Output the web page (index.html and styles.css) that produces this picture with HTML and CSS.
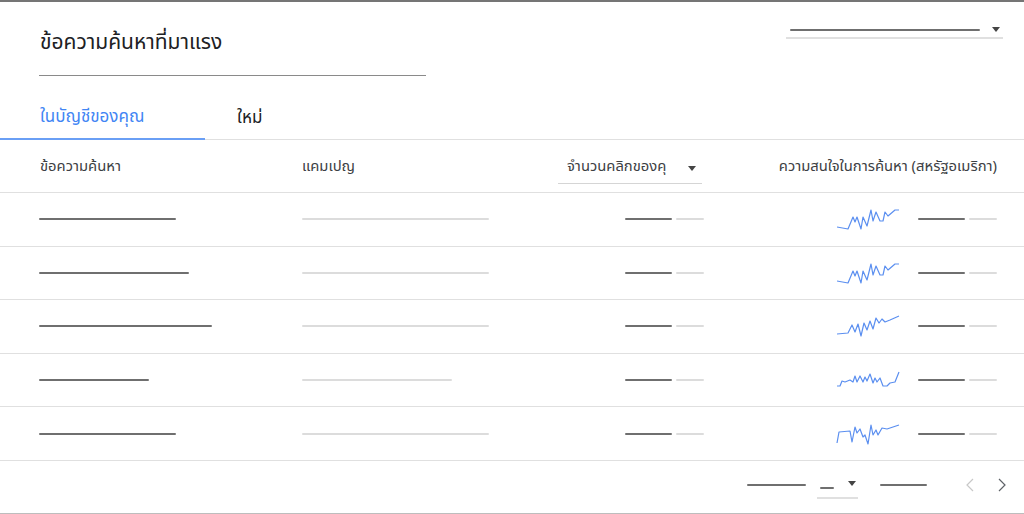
FILE: index.html
```html
<!DOCTYPE html>
<html lang="th">
<head>
<meta charset="utf-8">
<link rel="stylesheet" href="styles.css">
</head>
<body>
<div class="card">
  <div class="top">
    <div class="title-block">
      <h1 class="title">ข้อความค้นหาที่มาแรง</h1>
      <div class="title-rule"></div>
    </div>
    <div class="top-select">
      <span class="ph-dark ts-line"></span>
      <span class="tri"></span>
    </div>
  </div>
  <div class="tabs">
    <div class="tab active">ในบัญชีของคุณ</div>
    <div class="tab second">ใหม่</div>
  </div>
  <div class="table">
    <div class="row head">
      <div class="c1">ข้อความค้นหา</div>
      <div class="c2">แคมเปญ</div>
      <div class="c3"><div class="hsel"><span>จำนวนคลิกของคุ</span><span class="tri"></span></div></div>
      <div class="c4">ความสนใจในการค้นหา (สหรัฐอเมริกา)</div>
    </div>
    <div class="row">
      <div class="c1"><span class="ph-dark" style="width:137px"></span></div>
      <div class="c2"><span class="ph-light" style="width:187px"></span></div>
      <div class="c3"><span class="ph-dark num"></span><span class="ph-light sub"></span></div>
      <div class="c4">
        <svg class="spark" viewBox="836 206 66 28" width="66" height="28"><polyline points="837,228 848,230 853,218 855,223 857,218 861,230 863,218 867,227 871,211 873,222 876,213 880,222 883,222 885,213 888,217 895,211 899,211"/></svg>
        <span class="ph-dark num"></span><span class="ph-light sub"></span>
      </div>
    </div>
    <div class="row">
      <div class="c1"><span class="ph-dark" style="width:150px"></span></div>
      <div class="c2"><span class="ph-light" style="width:187px"></span></div>
      <div class="c3"><span class="ph-dark num"></span><span class="ph-light sub"></span></div>
      <div class="c4">
        <svg class="spark" viewBox="836 206 66 28" width="66" height="28"><polyline points="837,228 848,230 853,218 855,223 857,218 861,230 863,218 867,227 871,211 873,222 876,213 880,222 883,222 885,213 888,217 895,211 899,211"/></svg>
        <span class="ph-dark num"></span><span class="ph-light sub"></span>
      </div>
    </div>
    <div class="row">
      <div class="c1"><span class="ph-dark" style="width:173px"></span></div>
      <div class="c2"><span class="ph-light" style="width:187px"></span></div>
      <div class="c3"><span class="ph-dark num"></span><span class="ph-light sub"></span></div>
      <div class="c4">
        <svg class="spark" viewBox="836 313 66 28" width="66" height="28"><polyline points="837,335 848,334 852,326 855,333 858,325 861,337 864,324 867,331 870,322 873,330 876,319 879,324 882,320 885,323 890,321 899,317"/></svg>
        <span class="ph-dark num"></span><span class="ph-light sub"></span>
      </div>
    </div>
    <div class="row">
      <div class="c1"><span class="ph-dark" style="width:110px"></span></div>
      <div class="c2"><span class="ph-light" style="width:150px"></span></div>
      <div class="c3"><span class="ph-dark num"></span><span class="ph-light sub"></span></div>
      <div class="c4">
        <svg class="spark" viewBox="836 367 66 28" width="66" height="28"><polyline points="837,387 840,387 842,382 845,383 850,381 853,383 855,377 857,383 860,377 863,383 865,378 867,382 870,375 873,384 875,379 877,383 880,379 883,387 887,387 890,384 895,383 899,373"/></svg>
        <span class="ph-dark num"></span><span class="ph-light sub"></span>
      </div>
    </div>
    <div class="row">
      <div class="c1"><span class="ph-dark" style="width:137px"></span></div>
      <div class="c2"><span class="ph-light" style="width:187px"></span></div>
      <div class="c3"><span class="ph-dark num"></span><span class="ph-light sub"></span></div>
      <div class="c4">
        <svg class="spark" viewBox="836 422 66 28" width="66" height="28"><polyline points="837,445 839,434 850,433 852,444 855,429 857,435 860,431 863,439 865,437 868,446 871,427 873,437 876,432 878,437 882,430 887,431 899,427"/></svg>
        <span class="ph-dark num"></span><span class="ph-light sub"></span>
      </div>
    </div>
  </div>
  <div class="footer">
    <span class="ph-dark f1"></span>
    <div class="fsel"><span class="ph-dark fdash"></span><span class="tri"></span></div>
    <span class="ph-dark f2"></span>
    <svg class="chev prev" width="10" height="14" viewBox="0 0 10 14"><polyline points="8,1 2,7 8,13"/></svg>
    <svg class="chev next" width="10" height="14" viewBox="0 0 10 14"><polyline points="2,1 8,7 2,13"/></svg>
  </div>
</div>
</body>
</html>
```

FILE: styles.css
```css
* { box-sizing: border-box; }
html, body { margin: 0; padding: 0; background: #fff; }
body {
  width: 1024px;
  height: 514px;
  overflow: hidden;
  font-family: "Noto Sans", "Noto Sans Thai", "DejaVu Sans", sans-serif;
  color: #202124;
}
.card {
  height: 514px;
  border-top: 2px solid #757575;
  border-bottom: 1px solid #bdbdbd;
  display: flex;
  flex-direction: column;
}
.top {
  display: flex;
  justify-content: space-between;
  padding: 0 21px 0 39px;
  height: 94px;
}
.title-block { padding-top: 26px; }
.title {
  margin: 0;
  font-size: 21px;
  font-weight: 400;
  line-height: 26px;
  padding-left: 1px;
  color: #202124;
}
.title-rule {
  margin-top: 21px;
  width: 387px;
  height: 1px;
  background: #8a8a8a;
}
.top-select {
  margin-top: 22px;
  width: 217px;
  height: 15px;
  border-bottom: 2px solid #e0e0e0;
  display: flex;
  align-items: center;
  padding: 0 2px 2px 4px;
  gap: 12px;
}
.ts-line { width: 190px; }
.tri {
  display: inline-block;
  width: 0; height: 0;
  border-left: 4.5px solid transparent;
  border-right: 4.5px solid transparent;
  border-top: 5px solid #444;
}
.ph-dark {
  display: inline-block;
  height: 2px;
  background: #6f6f6f;
  border-radius: 1px;
}
.ph-light {
  display: inline-block;
  height: 2px;
  background: #dcdcdc;
  border-radius: 1px;
}
.tabs {
  display: flex;
  height: 44px;
  border-bottom: 1px solid #e0e0e0;
  font-size: 17px;
  line-height: 20px;
}
.tab {
  display: flex;
  align-items: center;
  padding-bottom: 2px;
  color: #202124;
}
.tab.active {
  width: 205px;
  padding-left: 40px;
  color: #4285f4;
  border-bottom: 2px solid #6a9ff5;
  margin-bottom: -1px;
}
.tab.second { padding-left: 32px; }
.table { display: flex; flex-direction: column; }
.row {
  display: grid;
  grid-template-columns: 302px 230px 172px 1fr;
  align-items: center;
  height: 53.6px;
  padding-right: 27px;
  border-bottom: 1px solid #e0e0e0;
  font-size: 14.8px;
  color: #3c4043;
}
.row.head { height: 53px; }
.c1 { padding-left: 39px; display: flex; }
.head .c1 { padding-left: 40px; }
.c2 { display: flex; }
.c3, .c4 {
  display: flex;
  justify-content: flex-end;
  align-items: center;
  white-space: nowrap;
}
.num { width: 47px; }
.sub { width: 28px; margin-left: 4px; }
.spark { margin-right: 16px; fill: none; stroke: #5b8ff0; stroke-width: 1.2; stroke-linejoin: round; }
.hsel {
  width: 144px;
  margin-right: 2px;
  display: flex;
  justify-content: space-between;
  align-items: center;
  padding: 0 6px 3px 9px;
  border-bottom: 1px solid #d5d5d5;
  position: relative;
  top: 4px;
}
.hsel span:first-child { position: relative; top: -2px; }
.footer {
  flex: 1;
  display: flex;
  justify-content: flex-end;
  align-items: center;
  padding-right: 17px;
  padding-bottom: 3px;
}
.f1 { width: 59px; margin-right: 11px; }
.fsel {
  width: 41px;
  display: flex;
  align-items: center;
  padding: 6px 2px 7px 3px;
  border-bottom: 2px solid #e0e0e0;
  gap: 14px;
  position: relative;
  top: 4px;
  margin-right: 22px;
}
.fdash { width: 15px; }
.fsel .tri { position: relative; top: -4px; }
.f2 { width: 47px; margin-right: 38px; }
.chev { fill: none; stroke-width: 1.2; }
.prev { stroke: #c8c8c8; margin-right: 22px; }
.next { stroke: #5f6368; }
```
